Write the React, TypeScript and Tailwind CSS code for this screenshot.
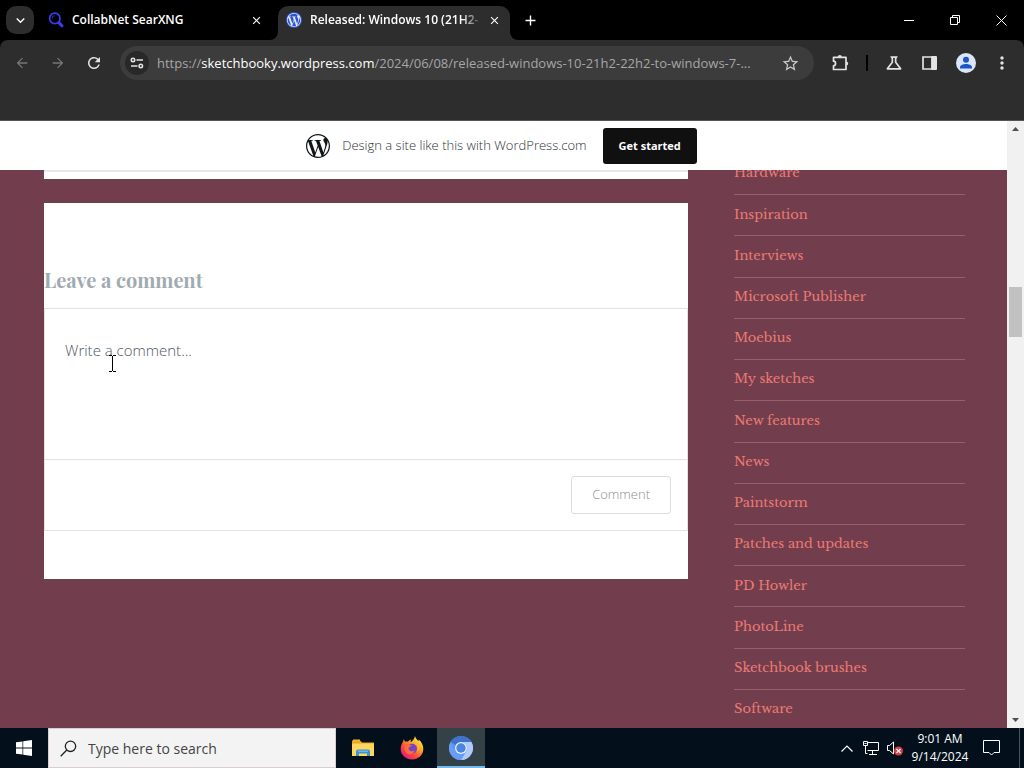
import type { ReactNode } from "react";
import { SiWordpress } from "react-icons/si";
import {
  MdArrowBack,
  MdArrowForward,
  MdRefresh,
  MdStarBorder,
  MdOutlineScience,
  MdMoreVert,
  MdClose,
  MdAdd,
  MdExpandMore,
} from "react-icons/md";

const categories = [
  "Hardware",
  "Inspiration",
  "Interviews",
  "Microsoft Publisher",
  "Moebius",
  "My sketches",
  "New features",
  "News",
  "Paintstorm",
  "Patches and updates",
  "PD Howler",
  "PhotoLine",
  "Sketchbook brushes",
  "Software",
];

function IconButton({ label, className = "", children }: { label: string; className?: string; children: ReactNode }) {
  return (
    <button type="button" aria-label={label} className={`flex shrink-0 items-center justify-center ${className}`}>
      {children}
    </button>
  );
}

function SearxLogo() {
  return (
    <svg width="16" height="16" viewBox="0 0 16 16" fill="none" stroke="#3b3bef" aria-hidden="true">
      <circle cx="6.8" cy="6.4" r="5.2" strokeWidth="1.7" />
      <path d="M4.2 6.3a2.7 2.7 0 0 1 2.6-2.6" strokeWidth="1.1" stroke="#2929a8" />
      <path d="M10.6 10.4l4.2 4.3" strokeWidth="3" />
    </svg>
  );
}

function TabStrip() {
  return (
    <div className="flex h-10 shrink-0 bg-black">
      <div className="flex w-12 shrink-0 items-center pl-[6px]">
        <IconButton label="Search tabs" className="size-7 rounded-[10px] bg-[#2d2d2d]">
          <MdExpandMore size={17} />
        </IconButton>
      </div>
      <div className="flex w-[222px] items-center pr-[6px] text-[12px] font-semibold">
        <SearxLogo />
        <span className="ml-2 flex-1 truncate">CollabNet SearXNG</span>
        <IconButton label="Close tab" className="size-4">
          <MdClose size={13} />
        </IconButton>
      </div>
      <div className="flex w-[248px] items-end">
        <svg width="8" height="8" viewBox="0 0 8 8" aria-hidden="true">
          <path d="M8 0v8H0a8 8 0 0 0 8-8z" fill="#2d2d2d" />
        </svg>
        <div className="mt-[6px] flex h-[34px] min-w-0 flex-1 items-center self-start rounded-t-[10px] bg-[#2d2d2d] px-2 pb-[6px] text-[12px] font-semibold">
          <span className="flex size-4 shrink-0 items-center justify-center rounded-full bg-[#2f55c8] text-[#dfe6ff]">
            <SiWordpress size={14} />
          </span>
          <span className="ml-2 w-[168px] overflow-hidden whitespace-nowrap [mask-image:linear-gradient(to_right,black_152px,transparent_172px)]">
            Released: Windows 10 (21H2-2
          </span>
          <IconButton label="Close tab" className="ml-auto size-4">
            <MdClose size={13} />
          </IconButton>
        </div>
        <svg width="8" height="8" viewBox="0 0 8 8" aria-hidden="true">
          <path d="M0 0v8h8a8 8 0 0 1-8-8z" fill="#2d2d2d" />
        </svg>
      </div>
      <IconButton label="New tab" className="w-6">
        <MdAdd size={17} />
      </IconButton>
      <div className="ml-auto flex">
        <IconButton label="Minimize" className="w-[46px]">
          <svg width="10" height="10" viewBox="0 0 10 10" stroke="white"><path d="M0 5.5h10" /></svg>
        </IconButton>
        <IconButton label="Restore" className="w-[46px]">
          <svg width="10" height="10" viewBox="0 0 10 10" stroke="white" fill="none"><path d="M.5 2.5h7v7h-7zM2.5 2.5v-2h7v7h-2" /></svg>
        </IconButton>
        <IconButton label="Close" className="w-[46px]">
          <svg width="11" height="11" viewBox="0 0 11 11" stroke="white"><path d="M.5.5l10 10M10.5.5l-10 10" /></svg>
        </IconButton>
      </div>
    </div>
  );
}

function Toolbar() {
  return (
    <div className="bg-black">
      <div className="flex h-20 items-start rounded-t-lg bg-[#2d2d2d] pt-[6px] text-[#e3e3e3]">
        <div className="flex h-[34px] min-w-0 flex-1 items-center pl-1">
          <IconButton label="Back" className="w-9 text-[#757575]"><MdArrowBack size={16} /></IconButton>
          <IconButton label="Forward" className="w-9 text-[#757575]"><MdArrowForward size={16} /></IconButton>
          <IconButton label="Reload" className="w-9"><MdRefresh size={18} /></IconButton>
          <div className="ml-2 flex h-[34px] min-w-0 flex-1 items-center rounded-full bg-[#3c3c3c] pr-3 pl-[5px]">
            <IconButton label="Site information" className="size-6 rounded-full bg-[#282828]">
              <svg width="14" height="12" viewBox="0 0 14 12" fill="none" stroke="#e3e3e3" strokeWidth="1.6">
                <circle cx="3" cy="3" r="1.7" />
                <path d="M6.5 3H13M1 9h6.500" />
                <circle cx="10.800" cy="9" r="1.700" />
              </svg>
            </IconButton>
            <div className="ml-2 min-w-0 flex-1 truncate pt-[2px] text-[13px] text-[#a6a6a6]">
              https://<span className="text-white">sketchbooky.wordpress.com</span>/2024/06/08/released-windows-10-21h2-22h2-to-windows-7-...
            </div>
            <IconButton label="Bookmark this tab" className="ml-2 w-6 text-[#c7c7c7]"><MdStarBorder size={19} /></IconButton>
          </div>
        </div>
        <div className="flex h-[34px] items-center pr-1 pl-2">
          <IconButton label="Extensions" className="w-9">
            <svg width="18" height="18" viewBox="0 0 18 18" fill="#e3e3e3">
              <path d="M2.500 3.300H15V15.500H2.500V11.800C5.200 11.800 5.200 7.200 2.500 7.200z" fill="none" stroke="#e3e3e3" strokeWidth="1.700" strokeLinejoin="round" />
              <path d="M6.800 3a2 2 0 0 1 4 0zM15.200 7.400a2 2 0 0 1 0 4z" />
            </svg>
          </IconButton>
          <span className="mx-2 h-4 w-[2px] bg-black" />
          <IconButton label="Labs" className="w-9"><MdOutlineScience size={20} /></IconButton>
          <IconButton label="Side panel" className="w-9">
            <svg width="16" height="14" viewBox="0 0 16 14"><path d="M1 1h9v12H1z" fill="none" stroke="#e3e3e3" strokeWidth="1.700" /><path d="M9.500 0H14a1 1 0 0 1 1 1v12a1 1 0 0 1-1 1H9.500z" fill="#e3e3e3" /></svg>
          </IconButton>
          <IconButton label="Profile" className="w-9">
            <svg width="20" height="20" viewBox="0 0 20 20">
              <circle cx="10" cy="10" r="10" fill="#dbe6fd" />
              <circle cx="10" cy="6.700" r="3" fill="#1a56c4" />
              <path d="M4 15.500v-1.200C4 12 7.500 11 10 11s6 1 6 3.300v1.200z" fill="#1a56c4" />
            </svg>
          </IconButton>
          <IconButton label="Menu" className="w-9"><MdMoreVert size={20} /></IconButton>
        </div>
      </div>
    </div>
  );
}

function CommentCard() {
  return (
    <section className="mt-6 bg-white pt-[63px] pb-12">
      <h3 className="h-[42px] font-['Playfair_Display','Liberation_Serif',serif] text-[20px] leading-7 font-bold text-[#a0abb0]">
        Leave a comment
      </h3>
      <form className="relative border border-[#e2e2e4]">
        <textarea
          aria-label="Write a comment"
          placeholder="Write a comment..."
          className="block h-[150px] w-full resize-none px-5 pt-[29px] text-[15px] leading-6 font-light text-[#2c3338] outline-none placeholder:text-[#50575e] placeholder:opacity-100"
        />
        <div className="flex justify-end border-t border-[#e2e2e4] p-4">
          <button type="button" className="h-[38px] rounded-[3px] border border-[#dcdcde] px-5 text-[13px] font-light text-[#8c8f94]">
            Comment
          </button>
        </div>
        <svg className="absolute top-[46px] left-[64px]" width="8" height="17" viewBox="0 0 8 17" fill="none" stroke="black" aria-hidden="true">
          <path d="M0 .5h3M4 .5h3M3.500 1v15M0 16.500h3M4 16.500h3" />
        </svg>
      </form>
    </section>
  );
}

function Scrollbar() {
  return (
    <div className="flex w-[17px] shrink-0 flex-col items-center justify-between bg-[#f1f1f1] py-[6px]" aria-hidden="true">
      <svg width="7" height="4" viewBox="0 0 7 4"><path d="M0 4L3.500 0 7 4z" fill="#505050" /></svg>
      <div className="flex w-full flex-1 flex-col px-[2px]">
        <div className="flex-[156]" />
        <div className="h-[50px] bg-[#c1c1c1]" />
        <div className="flex-[381]" />
      </div>
      <svg width="7" height="4" viewBox="0 0 7 4"><path d="M0 0l3.500 4L7 0z" fill="#505050" /></svg>
    </div>
  );
}

function Page() {
  return (
    <div className="flex min-h-0 flex-1 border-t border-[#555]">
      <div className="flex min-w-0 flex-1 flex-col bg-[#723e4e]">
        <header className="flex h-[49px] shrink-0 items-center justify-center bg-white pr-1">
          <SiWordpress size={24} color="#101517" />
          <p className="ml-3 text-[13px] font-light text-[#2c3338]">Design a site like this with WordPress.com</p>
          <a href="#start" className="ml-4 flex h-9 items-center rounded-[3px] bg-[#101010] px-4 pt-[2px] text-[11px] font-bold text-white">
            Get started
          </a>
        </header>
        <div className="flex min-h-0 flex-1 items-start gap-[46px] overflow-hidden pr-[42px] pl-11">
          <main className="min-w-0 flex-1">
            <div className="h-[9px] border-t-2 border-[#e6e9e9] bg-white" />
            <CommentCard />
          </main>
          <ul className="-mt-4 flex h-[577px] w-[231px] shrink-0 flex-col font-['Libre_Baskerville','Liberation_Serif',serif] text-[13px] text-[#ec7a72]">
            {categories.map((name) => (
              <li key={name} className="flex flex-1 items-center border-b border-[#94616f] pb-[2px]">
                <a href="#category">{name}</a>
              </li>
            ))}
          </ul>
        </div>
      </div>
      <Scrollbar />
    </div>
  );
}

function FolderIcon() {
  return (
    <svg width="22" height="20" viewBox="0 0 22 20" aria-hidden="true">
      <path d="M0 2.500h8l2 2h12V18H0z" fill="#e5a823" />
      <path d="M1 1.500h7v2H1z" fill="#f3b72e" />
      <path d="M0 5.500h22V18H0z" fill="#ffd75e" />
      <path d="M4 18v-4.500a2 2 0 0 1 2-2h10a2 2 0 0 1 2 2V18h-3v-2.500H7V18z" fill="#3a93d2" />
      <path d="M6 12.500h10v1.500H6z" fill="#69b8ea" />
    </svg>
  );
}

function FirefoxIcon() {
  return (
    <svg width="24" height="24" viewBox="0 0 24 24" aria-hidden="true">
      <defs>
        <linearGradient id="fox" x1="0.850" y1="0.050" x2="0.200" y2="0.900">
          <stop offset="0" stopColor="#fff34f" />
          <stop offset="0.350" stopColor="#ffab24" />
          <stop offset="0.700" stopColor="#ff4b3e" />
          <stop offset="1" stopColor="#e5207b" />
        </linearGradient>
      </defs>
      <path d="M15 0c.4 2.200 2 3.500 3.500 5.200l.2-1.700c3 2.500 4.800 6 4.600 9.700C23 19.200 18 23.500 12 23.500S.7 19 .7 13c0-3 1-5.400 2.300-7.200l.7-2.500 1.500 2.400c1-.3 1.900-.2 2.800.1C9 4.500 10 3.800 11.300 3.600c-.8 1-.9 2-.4 2.700C12 5 14.500 3.600 15 0z" fill="url(#fox)" />
      <circle cx="12" cy="12.800" r="5" fill="#7542c9" />
      <path d="M5.500 8.300c2.600-.5 4.800.2 6.600 1.700-2.200.1-2.200 1.500-3.700 1.900.2 3.200 4.200 4.500 6.500 2.300-1 3.700-5 5-7.800 3.200-2.600-1.700-3.200-5.900-1.600-9.100z" fill="#ff6d35" />
      <path d="M14.500 5.500c3.800 2 4.500 6.800 2.200 10 2.600-1 3.800-4.500 2.400-7.700z" fill="#ffbd30" />
    </svg>
  );
}

function ChromiumIcon() {
  return (
    <svg width="24" height="24" viewBox="0 0 24 24" aria-hidden="true">
      <circle cx="12" cy="12" r="12" fill="#5c91ee" />
      <path d="M12 6h10.400A12 12 0 0 1 12 24l5.200-9A6 6 0 0 0 12 6z" fill="#aecbfa" />
      <path d="M1.600 6A12 12 0 0 1 22.400 6H12a6 6 0 0 0-5.200 3z" fill="#3f73c9" />
      <path d="M1.600 6A12 12 0 0 0 12 24l5.200-9A6 6 0 0 1 6.800 15z" fill="#669df6" />
      <circle cx="12" cy="12" r="6" fill="#e8f0fe" />
      <circle cx="12" cy="12" r="4.700" fill="#4a86e0" />
    </svg>
  );
}

function Taskbar() {
  return (
    <footer className="flex h-10 shrink-0 bg-[#03101c]">
      <IconButton label="Start" className="w-12">
        <svg width="16" height="16" viewBox="0 0 16 16" fill="white">
          <path d="M0 2.300l6.500-.9v6.200H0zM7.200 1.300L16 0v7.600H7.200zM0 8.400h6.500v6.200L0 13.700zM7.200 8.400H16V16l-8.800-1.300z" />
        </svg>
      </IconButton>
      <label className="flex w-72 items-center border border-[#d9cdd2] bg-[#f3f3f3] pl-[11px]">
        <svg width="17" height="17" viewBox="0 0 17 17" fill="none" stroke="#222" strokeWidth="1.300" aria-hidden="true">
          <circle cx="10.500" cy="6.300" r="5.200" />
          <path d="M6.800 10L.7 16.200" />
        </svg>
        <input aria-label="Search" placeholder="Type here to search" className="ml-[11px] min-w-0 flex-1 bg-transparent text-[14px] text-[#333] outline-none placeholder:text-[#444] placeholder:opacity-100" />
      </label>
      <div className="ml-[3px] flex">
        <IconButton label="File Explorer" className="w-12"><FolderIcon /></IconButton>
        <IconButton label="Firefox" className="w-[50px]"><FirefoxIcon /></IconButton>
        <IconButton label="Chromium" className="w-12 border-b-2 border-[#76b9ed] bg-[#344248] pt-[2px]"><ChromiumIcon /></IconButton>
      </div>
      <div className="ml-auto flex items-stretch text-white">
        <IconButton label="Show hidden icons" className="w-6">
          <svg width="12" height="7" viewBox="0 0 12 7" fill="none" stroke="white" strokeWidth="1.200"><path d="M.5 6.500L6 1l5.500 5.500" /></svg>
        </IconButton>
        <IconButton label="Network" className="w-6">
          <svg width="16" height="14" viewBox="0 0 16 14" fill="none" stroke="white"><path d="M4.500 1.500h11v8h-11M.5.500h4v4h-4zM2.500 4.500v8h2M9.500 9.500v4M6 13.500h8M1.500 2.500h2" /></svg>
        </IconButton>
        <IconButton label="Volume" className="w-6">
          <svg width="16" height="15" viewBox="0 0 16 15" fill="none"><path d="M.5 4.500h2l4-3.500v12l-4-3.500h-2z" stroke="white" /><circle cx="11.500" cy="10" r="4.500" fill="#d83b45" /><path d="M9.500 8l4 4M13.500 8l-4 4" stroke="white" strokeWidth="1.200" /></svg>
        </IconButton>
        <div className="flex w-[66px] flex-col items-center justify-center text-[12px] leading-[18px] whitespace-nowrap">
          <span>9:01 AM</span>
          <span>9/14/2024</span>
        </div>
        <IconButton label="Notifications" className="w-9">
          <svg width="17" height="16" viewBox="0 0 17 16" fill="none" stroke="white"><path d="M.5.500h16v12h-5.500l-2.500 2.500-2.500-2.500H.5z" /></svg>
        </IconButton>
        <div className="ml-[10px] w-[5px] border-l border-[#4b555d]" />
      </div>
    </footer>
  );
}

export default function App() {
  return (
    <div className="flex h-screen flex-col overflow-hidden bg-black font-['Segoe_UI','Open_Sans','Noto_Sans',sans-serif] text-white">
      <TabStrip />
      <Toolbar />
      <Page />
      <Taskbar />
    </div>
  );
}
